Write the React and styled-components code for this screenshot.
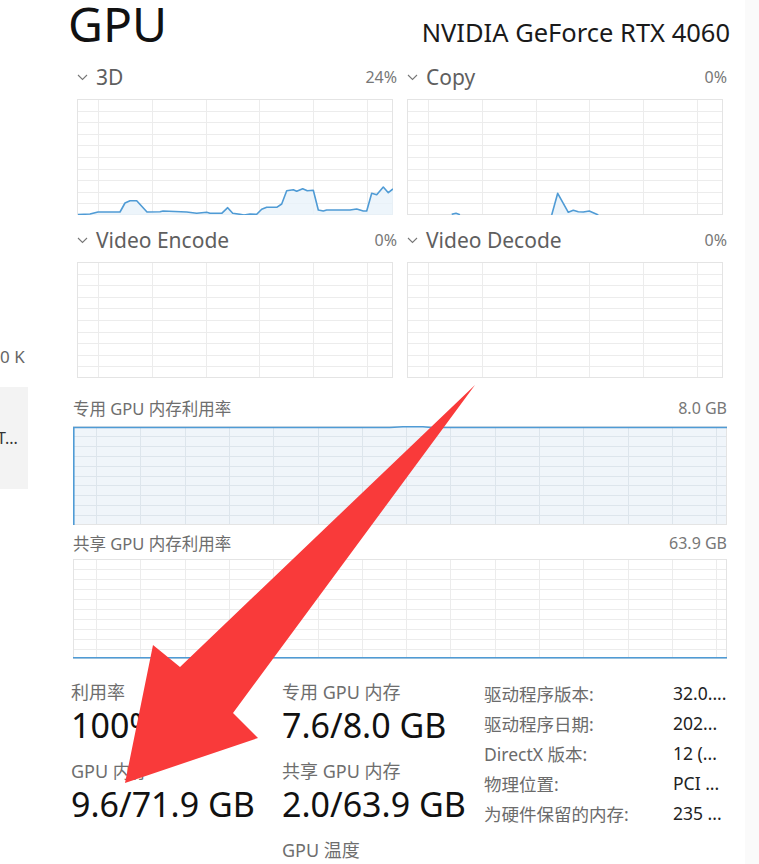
import React from "react";
import styled, { createGlobalStyle } from "styled-components";

const GlobalStyle = createGlobalStyle`
  html, body {
    margin: 0;
    padding: 0;
    background: #ffffff;
  }
  body {
    font-family: "Noto Sans", "Noto Sans CJK SC", sans-serif;
  }
`;

const Page = styled.div`
  position: relative;
  display: flex;
  width: 759px;
  height: 864px;
  overflow: hidden;
  background: #ffffff;
`;

const Sidebar = styled.aside`
  width: 28px;
  flex-shrink: 0;
  padding-top: 345px;
  overflow: hidden;
`;

const SideValue = styled.div`
  font-size: 17px;
  line-height: 24px;
  color: #666666;
  white-space: nowrap;
`;

const SideCard = styled.div`
  margin-top: 18px;
  height: 102px;
  background: #f3f3f3;
  display: flex;
  align-items: center;
  font-size: 16px;
  color: #333333;
  white-space: nowrap;
  span {
    margin-left: -3px;
  }
`;

const Main = styled.main`
  flex: 1;
  padding: 0 18px 0 45px;
`;

const RightStrip = styled.div`
  width: 14px;
  flex-shrink: 0;
  background: #fafafa;
`;

const Header = styled.header`
  display: flex;
  justify-content: space-between;
  align-items: baseline;
  height: 66px;
`;

const Title = styled.h1`
  margin: 0 0 0 -5px;
  font-size: 48px;
  line-height: 47px;
  font-weight: 400;
  color: #111111;
`;

const Model = styled.div`
  margin-right: -3px;
  font-size: 25.5px;
  color: #1a1a1a;
`;

const EngineGrid = styled.section`
  display: grid;
  grid-template-columns: 320px 320px;
  column-gap: 10px;
  row-gap: 14px;
  padding-left: 4px;
`;

const EngineCell = styled.div`
  display: flex;
  flex-direction: column;
`;

const LabelRow = styled.div`
  display: flex;
  justify-content: space-between;
  align-items: center;
  height: ${(p) => p.$h || 22}px;
  margin-bottom: ${(p) => p.$gap || 11}px;
`;

const EngineName = styled.div`
  display: flex;
  align-items: center;
  gap: 8px;
  font-size: 21px;
  color: #5f5f5f;
`;

const Percent = styled.div`
  font-size: 16px;
  color: #777777;
`;

const Chevron = styled.svg`
  width: 11px;
  height: 7px;
  display: block;
`;

const Graph = styled.svg`
  display: block;
  width: ${(p) => p.$w}px;
  height: ${(p) => p.$h}px;
`;

const MemSection = styled.section`
  margin-top: ${(p) => p.$top}px;
`;

const MemLabel = styled.div`
  font-size: 16.5px;
  color: #6e6e6e;
`;

const MemMax = styled.div`
  font-size: 16px;
  color: #777777;
`;

const Stats = styled.section`
  display: grid;
  grid-template-columns: 211px 202px 1fr;
  margin: 21px 0 0 -2px;
`;

const StatColumn = styled.div`
  display: flex;
  flex-direction: column;
`;

const StatLabel = styled.div`
  font-size: 18px;
  line-height: 24px;
  color: #6e6e6e;
  white-space: nowrap;
`;

const StatValue = styled.div`
  font-size: 34px;
  line-height: 42px;
  color: #111111;
  margin-bottom: 13px;
  white-space: nowrap;
`;

const InfoList = styled.dl`
  margin: -2px 0 0 0;
  display: grid;
  grid-template-columns: 189px 1fr;
  grid-auto-rows: 30px;
  align-items: center;
`;

const InfoKey = styled.dt`
  font-size: 17.5px;
  color: #6b6b6b;
  white-space: nowrap;
`;

const InfoVal = styled.dd`
  margin: 0;
  font-size: 17.5px;
  color: #222222;
  white-space: nowrap;
`;

const ArrowLayer = styled.svg`
  position: absolute;
  left: 0;
  top: 0;
  width: 759px;
  height: 864px;
  pointer-events: none;
`;

const LINE = "#4f9bd5";

function GridLines({ w, h, rows, colStart, colStep, color }) {
  const lines = [];
  for (let i = 1; i < rows; i++) {
    const y = Math.round((h * i) / rows) + 0.5;
    lines.push(
      <line key={"h" + i} x1={0} x2={w} y1={y} y2={y} stroke={color} strokeWidth={1} />
    );
  }
  for (let x = colStart; x < w; x += colStep) {
    const xx = Math.round(x) + 0.5;
    lines.push(
      <line key={"v" + x} x1={xx} x2={xx} y1={0} y2={h} stroke={color} strokeWidth={1} />
    );
  }
  lines.push(
    <rect key="b" x={0.5} y={0.5} width={w - 1} height={h - 1} fill="none" stroke="#e4e4e4" />
  );
  return <g>{lines}</g>;
}

const toPath = (pts) => pts.map((p, i) => (i ? "L" : "M") + p[0] + " " + p[1]).join(" ");

function EngineGraph({ series }) {
  const w = 316;
  const h = 116;
  return (
    <Graph $w={w} $h={h} viewBox={`0 0 ${w} ${h}`}>
      <GridLines w={w} h={h} rows={10} colStart={21} colStep={53.8} color="#ececec" />
      {series.map((pts, i) => (
        <g key={i}>
          <path
            d={`${toPath(pts)} L${pts[pts.length - 1][0]} ${h} L${pts[0][0]} ${h} Z`}
            fill="#e9f2fa"
            opacity={0.8}
          />
          <path d={toPath(pts)} fill="none" stroke={LINE} strokeWidth={1.6} strokeLinejoin="round" />
        </g>
      ))}
    </Graph>
  );
}

const engines = [
  {
    name: "3D",
    value: "24%",
    series: [
      [
        [1, 115.5], [13, 115], [21, 113], [43, 113], [48, 104], [53, 101.7], [59.7, 101.7],
        [70, 113], [83, 112.7], [86, 112], [109.7, 113], [119.7, 114.3], [129.7, 113.3],
        [133, 114.3], [144.7, 114.3], [150.7, 108.7], [155.7, 114.3], [163, 115.3], [167, 116],
        [173, 115], [179.7, 115.3], [184.7, 110.3], [189.7, 108.3], [199.7, 108.3], [204.7, 105],
        [209.7, 91.7], [216.3, 90.7], [219.7, 92.3], [225.7, 89.7], [230.3, 91.7], [236.3, 91.3],
        [241.3, 111], [246.3, 112], [249.7, 111], [266.3, 111], [273, 111], [279.7, 110],
        [286.3, 112], [289.7, 112], [294.7, 94.3], [299.7, 95.7], [306.3, 88], [311.3, 93.7],
        [316, 90],
      ],
    ],
  },
  {
    name: "Copy",
    value: "0%",
    series: [
      [[44.7, 115.3], [49, 114.3], [53, 115.7]],
      [
        [144.7, 116], [150.7, 94.3], [161.3, 113.3], [166.3, 111.3], [171.3, 112.7],
        [176.3, 113], [182.3, 112], [191.3, 116],
      ],
    ],
  },
  { name: "Video Encode", value: "0%", series: [] },
  { name: "Video Decode", value: "0%", series: [] },
];

function DedicatedGraph() {
  const w = 654;
  const h = 99;
  return (
    <Graph $w={w} $h={h} viewBox={`0 0 ${w} ${h}`}>
      <rect x={0} y={1} width={w} height={h - 1} fill="#f0f5fa" />
      <GridLines w={w} h={h} rows={10} colStart={23} colStep={44.3} color="#dde5ec" />
      <path
        d={`M0 1.5 L317 1.5 L330 0.8 L350 0.8 L358 1.5 L${w} 1.5`}
        fill="none"
        stroke={LINE}
        strokeWidth={1.6}
      />
      <line x1={0.8} x2={0.8} y1={1} y2={h} stroke={LINE} strokeWidth={1.6} />
    </Graph>
  );
}

function SharedGraph() {
  const w = 654;
  const h = 100;
  return (
    <Graph $w={w} $h={h} viewBox={`0 0 ${w} ${h}`}>
      <GridLines w={w} h={h} rows={10} colStart={23} colStep={44.3} color="#ececec" />
      <line x1={0} x2={w} y1={h - 1.2} y2={h - 1.2} stroke={LINE} strokeWidth={1.6} />
    </Graph>
  );
}

const ChevronIcon = () => (
  <Chevron viewBox="0 0 11 7">
    <polyline points="1,1 5.5,5.5 10,1" fill="none" stroke="#777" strokeWidth="1.1" />
  </Chevron>
);

const info = [
  ["驱动程序版本:", "32.0...."],
  ["驱动程序日期:", "202..."],
  ["DirectX 版本:", "12 (..."],
  ["物理位置:", "PCI ..."],
  ["为硬件保留的内存:", "235 ..."],
];

export default function App() {
  return (
    <Page>
      <GlobalStyle />
      <Sidebar>
        <SideValue>0 K</SideValue>
        <SideCard>
          <span>T...</span>
        </SideCard>
      </Sidebar>
      <Main>
        <Header>
          <Title>GPU</Title>
          <Model>NVIDIA GeForce RTX 4060</Model>
        </Header>

        <EngineGrid>
          {engines.map((e) => (
            <EngineCell key={e.name}>
              <LabelRow>
                <EngineName>
                  <ChevronIcon />
                  {e.name}
                </EngineName>
                <Percent>{e.value}</Percent>
              </LabelRow>
              <EngineGraph series={e.series} />
            </EngineCell>
          ))}
        </EngineGrid>

        <MemSection $top={20}>
          <LabelRow $h={20} $gap={8}>
            <MemLabel>专用 GPU 内存利用率</MemLabel>
            <MemMax>8.0 GB</MemMax>
          </LabelRow>
          <DedicatedGraph />
        </MemSection>

        <MemSection $top={8}>
          <LabelRow $h={20} $gap={6}>
            <MemLabel>共享 GPU 内存利用率</MemLabel>
            <MemMax>63.9 GB</MemMax>
          </LabelRow>
          <SharedGraph />
        </MemSection>

        <Stats>
          <StatColumn>
            <StatLabel>利用率</StatLabel>
            <StatValue>100%</StatValue>
            <StatLabel>GPU 内存</StatLabel>
            <StatValue>9.6/71.9 GB</StatValue>
          </StatColumn>
          <StatColumn>
            <StatLabel>专用 GPU 内存</StatLabel>
            <StatValue>7.6/8.0 GB</StatValue>
            <StatLabel>共享 GPU 内存</StatLabel>
            <StatValue>2.0/63.9 GB</StatValue>
            <StatLabel>GPU 温度</StatLabel>
          </StatColumn>
          <InfoList>
            {info.map(([k, v]) => (
              <React.Fragment key={k}>
                <InfoKey>{k}</InfoKey>
                <InfoVal>{v}</InfoVal>
              </React.Fragment>
            ))}
          </InfoList>
        </Stats>
      </Main>
      <RightStrip />

      <ArrowLayer viewBox="0 0 759 864">
        <polygon points="475,385 233,713 258,738 125,783 153,645 180,667" fill="#f93a3a" />
      </ArrowLayer>
    </Page>
  );
}
